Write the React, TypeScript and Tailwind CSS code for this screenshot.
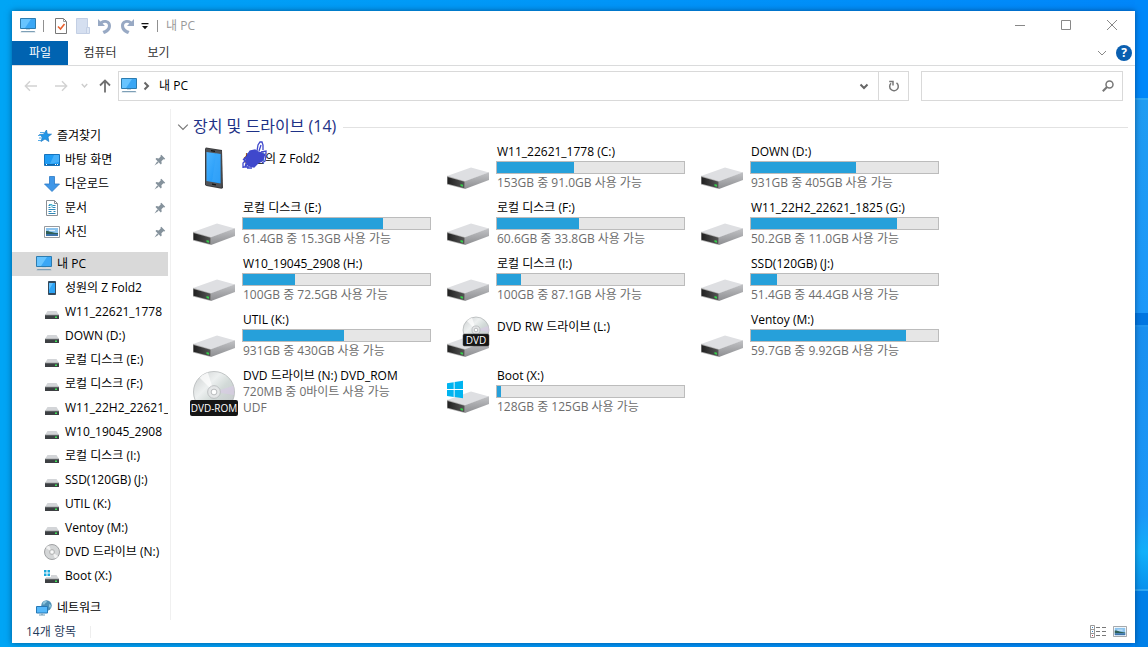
import type { ReactNode } from "react";

type DriveKind = "phone" | "drive" | "dvd-rw" | "dvd-rom" | "boot";

type Drive = {
  name: string;
  kind: DriveKind;
  used?: number;
  info?: string;
  format?: string;
};

const DRIVES: Drive[] = [
  { name: "성원의 Z Fold2", kind: "phone" },
  { name: "W11_22621_1778 (C:)", kind: "drive", used: 41, info: "153GB 중 91.0GB 사용 가능" },
  { name: "DOWN (D:)", kind: "drive", used: 56, info: "931GB 중 405GB 사용 가능" },
  { name: "로컬 디스크 (E:)", kind: "drive", used: 75, info: "61.4GB 중 15.3GB 사용 가능" },
  { name: "로컬 디스크 (F:)", kind: "drive", used: 44, info: "60.6GB 중 33.8GB 사용 가능" },
  { name: "W11_22H2_22621_1825 (G:)", kind: "drive", used: 78, info: "50.2GB 중 11.0GB 사용 가능" },
  { name: "W10_19045_2908 (H:)", kind: "drive", used: 28, info: "100GB 중 72.5GB 사용 가능" },
  { name: "로컬 디스크 (I:)", kind: "drive", used: 13, info: "100GB 중 87.1GB 사용 가능" },
  { name: "SSD(120GB) (J:)", kind: "drive", used: 14, info: "51.4GB 중 44.4GB 사용 가능" },
  { name: "UTIL (K:)", kind: "drive", used: 54, info: "931GB 중 430GB 사용 가능" },
  { name: "DVD RW 드라이브 (L:)", kind: "dvd-rw" },
  { name: "Ventoy (M:)", kind: "drive", used: 83, info: "59.7GB 중 9.92GB 사용 가능" },
  { name: "DVD 드라이브 (N:) DVD_ROM", kind: "dvd-rom", info: "720MB 중 0바이트 사용 가능", format: "UDF" },
  { name: "Boot (X:)", kind: "boot", used: 2, info: "128GB 중 125GB 사용 가능" },
];

const QUICK_ACCESS = [
  { name: "바탕 화면", icon: <DesktopIcon /> },
  { name: "다운로드", icon: <DownloadIcon /> },
  { name: "문서", icon: <DocumentIcon /> },
  { name: "사진", icon: <PictureIcon /> },
];

const TREE = [
  { name: "성원의 Z Fold2", icon: <SmallPhoneIcon /> },
  { name: "W11_22621_1778", icon: <SmallDriveIcon /> },
  { name: "DOWN (D:)", icon: <SmallDriveIcon /> },
  { name: "로컬 디스크 (E:)", icon: <SmallDriveIcon /> },
  { name: "로컬 디스크 (F:)", icon: <SmallDriveIcon /> },
  { name: "W11_22H2_22621_", icon: <SmallDriveIcon /> },
  { name: "W10_19045_2908", icon: <SmallDriveIcon /> },
  { name: "로컬 디스크 (I:)", icon: <SmallDriveIcon /> },
  { name: "SSD(120GB) (J:)", icon: <SmallDriveIcon /> },
  { name: "UTIL (K:)", icon: <SmallDriveIcon /> },
  { name: "Ventoy (M:)", icon: <SmallDriveIcon /> },
  { name: "DVD 드라이브 (N:)", icon: <SmallDiscIcon /> },
  { name: "Boot (X:)", icon: <SmallDriveIcon boot /> },
];

export default function App() {
  return (
    <div className="flex min-h-screen bg-linear-to-r from-[#00a5f5] to-[#0086fa] font-['Open_Sans','Noto_Sans_CJK_KR',sans-serif] text-xs text-black">
      <div className="relative z-10 mt-[11px] mb-1 ml-3 flex min-w-0 flex-1 flex-col bg-white shadow-[0_0_6px_rgba(0,40,80,0.6)]">
        <TitleBar />
        <Ribbon />
        <AddressBar />
        <div className="flex flex-1 pt-2">
          <Sidebar />
          <DriveList />
        </div>
        <StatusBar />
      </div>
      {/* Wallpaper strip on the right of the window */}
      <div className="flex w-[13px] shrink-0 flex-col">
        <div className="h-[98px] bg-[#0088fa]" />
        <div className="h-[215px] border-t-2 border-[#2fa9f5] bg-linear-to-b from-[#209cf2] to-[#1c98fa]" />
        <div className="h-3 bg-[#0076e2]" />
        <div className="h-[190px] border-t-2 border-[#2095f0] bg-linear-to-b from-[#1a90f0] to-[#1c98f8]" />
        <div className="h-[76px] border-b-2 border-[#2ea6f2] bg-linear-to-b from-[#1c98f8] via-[#12b0fa] to-[#0a92ee]" />
        <div className="flex-1 bg-[#0080e8]" />
      </div>
    </div>
  );
}

function TitleBar() {
  return (
    <header className="flex h-[30px] items-center pl-2">
      <PcIcon />
      <span className="ml-[7px] h-3 w-px bg-[#909090]" />
      <button aria-label="속성" className="ml-[10px]">
        <svg width="14" height="16" viewBox="0 0 14 16" fill="none">
          <path d="M1.5.5h8l3 3v12h-11z" fill="#fff" stroke="#777" />
          <path d="M9.5.5v3h3" stroke="#999" />
          <path d="m4 8.500 2.500 2.500L10.500 6" stroke="#e8602e" strokeWidth="1.600" />
        </svg>
      </button>
      <button aria-label="새 폴더" className="ml-2">
        <svg width="14" height="16" viewBox="0 0 14 16">
          <path d="M.5.5h11v15H.5z" fill="#d5dff0" stroke="#c3cfe4" />
          <path d="M10.500 9.500h3v6h-3z" fill="#dde6f4" stroke="#c3cfe4" />
        </svg>
      </button>
      <button aria-label="실행 취소" className="ml-[7px]">
        <UndoIcon />
      </button>
      <button aria-label="다시 실행" className="ml-2 -scale-x-100">
        <UndoIcon />
      </button>
      <button aria-label="빠른 실행 도구 모음 사용자 지정" className="ml-1.5">
        <svg width="8" height="8" viewBox="0 0 8 8">
          <path d="M.5 1h7v1.200h-7zM1 4h6L4 7.200z" fill="#111" />
        </svg>
      </button>
      <span className="ml-2 h-3 w-px bg-[#909090]" />
      <h1 className="ml-2 text-[#999]">내 PC</h1>
      <div className="ml-auto flex h-full pb-0.5">
        <button aria-label="최소화" className="grid w-[46px] place-items-center">
          <svg width="12" height="12" viewBox="0 0 12 12" stroke="#888">
            <path d="M1 6.500h10" />
          </svg>
        </button>
        <button aria-label="최대화" className="grid w-[46px] place-items-center">
          <svg width="12" height="12" viewBox="0 0 12 12" fill="none" stroke="#888">
            <path d="M1.500 1.500h9v9h-9z" />
          </svg>
        </button>
        <button aria-label="닫기" className="grid w-[46px] place-items-center">
          <svg width="12" height="12" viewBox="0 0 12 12" stroke="#888">
            <path d="m1 1 10 10M11 1 1 11" />
          </svg>
        </button>
      </div>
    </header>
  );
}

function Ribbon() {
  return (
    <nav className="flex h-[25px] items-center border-b border-[#dadbdc] pr-[3px]">
      <button className="h-6 w-14 bg-[#0063b1] text-white">파일</button>
      <button className="w-16 text-[#333]">컴퓨터</button>
      <button className="w-[53px] text-[#333]">보기</button>
      <button aria-label="리본 확장" className="mr-[9px] ml-auto">
        <Chevron className="text-[#888]" />
      </button>
      <button aria-label="도움말" className="grid size-4 place-items-center rounded-full bg-[#0a5fb0] text-xs leading-4 font-bold text-white">
        ?
      </button>
    </nav>
  );
}

function AddressBar() {
  return (
    <div className="flex items-center pt-[5px] pr-3 pl-3">
      <button aria-label="뒤로" className="w-[30px]">
        <ArrowIcon className="text-[#d2d2d2]" />
      </button>
      <button aria-label="앞으로" className="w-[26px]">
        <ArrowIcon className="rotate-180 text-[#d2d2d2]" />
      </button>
      <button aria-label="최근 위치" className="w-[17px] pl-px">
        <svg width="7" height="6" viewBox="0 0 7 6" fill="none" stroke="#ccc" strokeWidth="1.400">
          <path d="m.8 1 2.700 3L6.200 1" />
        </svg>
      </button>
      <button aria-label="위로" className="w-[21px] pl-px">
        <svg width="14" height="14" viewBox="0 0 14 14" fill="none" stroke="#707070" strokeWidth="1.800">
          <path d="M7 13.500V1.500M2 6.500l5-5 5 5" />
        </svg>
      </button>
      <div className="flex h-[30px] min-w-0 flex-1 items-center border border-[#d9d9d9] pl-0.5">
        <PcIcon />
        <Chevron className="ml-1 -rotate-90 text-[#666]" bold />
        <button className="ml-2">내 PC</button>
        <button aria-label="이전 위치" className="mr-[9px] ml-auto">
          <Chevron className="text-[#666]" bold />
        </button>
        <button aria-label="새로 고침" className="grid h-full w-[30px] place-items-center border-l border-[#d9d9d9]">
          <svg width="12" height="12" viewBox="0 0 12 12" fill="none" stroke="#777" strokeWidth="1.500">
            <path d="M3 3.300a4.300 4.300 0 1 0 5.500-.4M1.200 1.500H5v4" />
          </svg>
        </button>
      </div>
      <label className="ml-3 flex h-[30px] w-[202px] items-center border border-[#d9d9d9] pr-2">
        <input type="search" aria-label="내 PC 검색" className="min-w-0 flex-1 px-2 outline-none" />
        <svg width="12" height="12" viewBox="0 0 12 12" fill="none" stroke="#777">
          <circle cx="7.500" cy="4.500" r="3.500" strokeWidth="1.500" />
          <path d="M5 7 .8 11.200" strokeWidth="2" />
        </svg>
      </label>
    </div>
  );
}

function Sidebar() {
  return (
    <aside className="w-[159px] shrink-0 border-r border-[#f0f0f0] pt-[15px] pr-0.5">
      <TreeRow icon={<StarIcon />} name="즐겨찾기" top />
      {QUICK_ACCESS.map((item) => (
        <TreeRow key={item.name} icon={item.icon} name={item.name} pinned />
      ))}
      <div className="h-2" />
      <TreeRow icon={<PcIcon />} name="내 PC" top selected />
      {TREE.map((item) => (
        <TreeRow key={item.name} icon={item.icon} name={item.name} />
      ))}
      <div className="h-2" />
      <TreeRow icon={<NetworkIcon />} name="네트워크" top />
    </aside>
  );
}

type TreeRowProps = {
  icon: ReactNode;
  name: string;
  top?: boolean;
  pinned?: boolean;
  selected?: boolean;
};

function TreeRow({ icon, name, top, pinned, selected }: TreeRowProps) {
  return (
    <a
      href="#"
      className={`flex h-6 items-center gap-[5px] overflow-hidden whitespace-nowrap ${top ? "pl-6" : "pl-8"} ${selected ? "bg-[#d9d9d9]" : ""}`}
    >
      <span className="grid w-4 shrink-0 place-items-center">{icon}</span>
      <span>{name}</span>
      {pinned && <PinIcon />}
    </a>
  );
}

function DriveList() {
  return (
    <main className="min-w-0 flex-1 pr-[7px]">
      <button className="flex h-[35px] w-full items-center pt-px pl-1.5">
        <Chevron className="text-[#777]" wide />
        <h2 className="ml-1 pb-0.5 text-base text-[#1e3287]">장치 및 드라이브 (14)</h2>
        <span className="ml-[7px] h-px flex-1 bg-[#e2e2e2]" />
      </button>
      <div className="grid grid-cols-[repeat(auto-fill,254px)] gap-y-2 pl-[19px]">
        {DRIVES.map((drive) => (
          <DriveTile key={drive.name} drive={drive} />
        ))}
      </div>
    </main>
  );
}

function DriveTile({ drive }: { drive: Drive }) {
  return (
    <div className="flex h-12 gap-1 leading-4 whitespace-nowrap">
      <DriveIcon kind={drive.kind} />
      <div className={`relative w-[189px] ${drive.info ? "" : "pt-[7px]"}`}>
        <div className="pl-px">{drive.name}</div>
        {drive.used !== undefined && (
          <div
            role="progressbar"
            aria-label={drive.name}
            aria-valuenow={drive.used}
            className="mt-px mb-px h-[13px] border border-[#bcbcbc] bg-[#e6e6e6]"
          >
            <div className="h-full bg-[#26a0da]" style={{ width: `${drive.used}%` }} />
          </div>
        )}
        {drive.info && <div className="pl-px text-[#6d6d6d]">{drive.info}</div>}
        {drive.format && <div className="pl-px text-[#6d6d6d]">{drive.format}</div>}
        {drive.kind === "phone" && <Scribble />}
      </div>
    </div>
  );
}

function StatusBar() {
  return (
    <footer className="flex h-[23px] items-center pr-2 pl-[14px] text-[#1e395b]">
      <span className="border-r border-[#eee] pr-[14px] leading-3">14개 항목</span>
      <button aria-label="자세히" className="ml-auto">
        <svg width="17" height="13" viewBox="0 0 17 13" fill="none">
          <path d="M.5.500h4v12h-4zM.5 4.500h4M.5 8.500h4" stroke="#999" />
          <path d="M6 2.500h4M12 2.500h4M6 6.500h4M12 6.500h4M6 10.500h4M12 10.500h4" stroke="#777" />
          <path d="M2 2.500h1M2 6.500h1" stroke="#3b85c4" />
          <path d="M2 10.500h1" stroke="#c43b4a" />
        </svg>
      </button>
      <button aria-label="큰 아이콘" className="ml-1.5">
        <PictureIcon small />
      </button>
    </footer>
  );
}

/* Large icons */

function DriveIcon({ kind }: { kind: DriveKind }) {
  return (
    <svg width="48" height="48" viewBox="0 0 48 48" className="shrink-0">
      <defs>
        <linearGradient id="front" x1="0" y1="0" x2="1" y2="0">
          <stop offset="0" stopColor="#202020" />
          <stop offset="1" stopColor="#555" />
        </linearGradient>
        <linearGradient id="side" x1="0" y1="0" x2="0" y2="1">
          <stop offset="0" stopColor="#c2c3c6" />
          <stop offset="1" stopColor="#8d8e91" />
        </linearGradient>
        <linearGradient id="screen" x1="0" y1="0" x2="1" y2="1">
          <stop offset="0" stopColor="#4db4ff" />
          <stop offset="1" stopColor="#1492f5" />
        </linearGradient>
        <linearGradient id="disc" x1="0" y1="0" x2="1" y2="1">
          <stop offset="0" stopColor="#c9cccd" />
          <stop offset=".35" stopColor="#edf0f0" />
          <stop offset=".55" stopColor="#d2dad8" />
          <stop offset="1" stopColor="#c2c4c8" />
        </linearGradient>
      </defs>
      {kind === "phone" && (
        <>
          <path d="M16 3.500 32 6l1 38-1.500.8L16.500 42 15 41V4.500z" fill="#3d3d3f" />
          <path d="M16 4.500 31.500 7v36.500L16 41z" fill="#505256" />
          <path d="M16.500 8 30.500 10v29.500l-14-2.500z" fill="url(#screen)" />
          <path d="m26 9.500 4.500.500v29l-8.500-1.500z" fill="#3da8fa" opacity=".6" />
          <path d="M21 6.700 25 7.300M22 40.200l4 .6" stroke="#151515" strokeWidth="1.300" />
        </>
      )}
      {(kind === "drive" || kind === "boot" || kind === "dvd-rw") && (
        <>
          <path d="M3 32 27 23.500 45 28.500 21 37.500z" fill="#dedfe2" />
          <path d="M21 37.200 45 28.200V36L21 45z" fill="url(#side)" />
          <path d="M3 31.800 21 37.200V45L3 40.500z" fill="#aaa" />
          <path d="m3.500 33 17 4.700v6.500l-17-4.400z" fill="url(#front)" />
          <path d="m16.500 40 2.500.700v2l-2.500-.600z" fill="#35d04b" />
        </>
      )}
      {kind === "dvd-rw" && (
        <>
          <Disc cx={32} cy={18} r={13} />
          <rect x="19" y="22" width="26" height="12" rx="1.500" fill="#151515" stroke="#444" strokeWidth=".5" />
          <text x="32" y="32" textAnchor="middle" fontSize="10" fill="#fff">
            DVD
          </text>
        </>
      )}
      {kind === "dvd-rom" && (
        <>
          <Disc cx={24} cy={24} r={20.5} />
          <rect x="0" y="32" width="48" height="16" rx="2" fill="#151515" />
          <text x="24" y="44" textAnchor="middle" fontSize="10" fill="#fff">
            DVD-ROM
          </text>
        </>
      )}
      {kind === "boot" && (
        <path d="m3 15.200 6.700-1v6.900H3zM10.600 14l8.400-1.200v8.300h-8.400zM3 22h6.700v6.900l-6.700-1zM10.600 22H19v8.300L10.600 29z" fill="#00b4f0" />
      )}
    </svg>
  );
}

function Disc({ cx, cy, r }: { cx: number; cy: number; r: number }) {
  return (
    <>
      <circle cx={cx} cy={cy} r={r} fill="url(#disc)" stroke="#b4b7b9" strokeWidth=".8" />
      <path d={`M${cx} ${cy} L${cx - r * 0.7} ${cy - r * 0.7} A${r} ${r} 0 0 1 ${cx - r * 0.3} ${cy - r * 0.95}z`} fill="#fff" opacity=".7" />
      <path d={`M${cx} ${cy} L${cx + r * 0.95} ${cy - r * 0.3} A${r} ${r} 0 0 1 ${cx + r * 0.98} ${cy + r * 0.15}z`} fill="#d9c9e6" opacity=".6" />
      <circle cx={cx} cy={cy} r={r * 0.31} fill="#e4e6e7" stroke="#b5b8ba" strokeWidth=".8" />
      <circle cx={cx} cy={cy} r={r * 0.14} fill="#fff" stroke="#a9acae" strokeWidth=".8" />
    </>
  );
}

// Pen marks drawn over the phone owner's name
function Scribble() {
  return (
    <svg width="28" height="32" viewBox="0 0 28 32" className="absolute -top-1 left-0" fill="none" stroke="#3f48cc" strokeWidth="1.300">
      <path d="M6 14 8 11l5-1 3 2 4 1 2 4-2 4-4 2-4 4-5-1-2-4-1-4z" fill="#3f48cc" />
      <path d="M1 28v-5l4-3-2 7 4-5-1 5H1M1 20l3-3-2 5M5 28h5" />
      <path d="m15 11 1-6 2-3h2l1 3v5M17 11l2-6" />
      <path d="m19 12 5-1v3l-4 1 4 1-1 5-3 2" />
    </svg>
  );
}

/* Small icons */

function PcIcon() {
  return (
    <svg width="16" height="16" viewBox="0 0 16 16">
      <path d="M.5.500h15v10H.5z" fill="#3ba7f5" stroke="#2c7cb0" />
      <path d="M1 1h10L5 10H1z" fill="#67c4ff" />
      <path d="M6 11h4v1H6z" fill="#c4d6e2" />
      <path d="M1.500 13h13l1 1.200H.5z" fill="#7d9fb6" />
    </svg>
  );
}

function StarIcon() {
  return (
    <svg width="16" height="16" viewBox="0 0 16 16">
      <path d="m10.500 2 .8 4 4.200.2-3.500 2.600.8 4.700-3.800-2.500-4 2.500 1.400-4.300L3.500 6.500l4-.3z" fill="#2196e8" stroke="#1878c4" strokeWidth=".7" />
      <path d="M4 4.500h4M2 7.500h3M3 10h3M2 12.500h3" stroke="#55aae6" />
    </svg>
  );
}

function DesktopIcon() {
  return (
    <svg width="16" height="12" viewBox="0 0 16 12">
      <path d="M.5.500h15v11H.5z" fill="#1e9cf5" stroke="#1673bd" />
      <path d="M10 1h5v7L6 10z" fill="#45b0fa" />
      <path d="M1 10.500h14" stroke="#1167a8" />
      <path d="M2 10.500h1M11 10.500h1M13 10.500h1" stroke="#fff" />
    </svg>
  );
}

function DownloadIcon() {
  return (
    <svg width="16" height="16" viewBox="0 0 16 16">
      <path d="M5.500.500h5v7.500h5L8 15.500.5 8h5z" fill="#3f97e8" stroke="#2b78c5" strokeWidth=".8" />
    </svg>
  );
}

function DocumentIcon() {
  return (
    <svg width="12" height="16" viewBox="0 0 12 16" fill="none">
      <path d="M.5.500h8l3 3v12H.5z" fill="#fff" stroke="#8a8f94" />
      <path d="M8.500.500v3h3" stroke="#8a8f94" />
      <path d="M2.500 5.500h2M6.500 5.500h3M2.500 7.500h2M6.500 7.500h3M2.500 9.500h7M2.500 11.500h3M7.500 11.500h2M2.500 13.500h7" stroke="#3188b8" />
      <path d="M3 4.500h3v3" stroke="#45b4cf" />
    </svg>
  );
}

function PictureIcon({ small }: { small?: boolean }) {
  return (
    <svg width={small ? 14 : 16} height={small ? 11 : 12} viewBox="0 0 16 12" preserveAspectRatio="none">
      <path d="M.5.500h15v11H.5z" fill="#fff" stroke="#969a9f" />
      <path d="M2 2h12v8H2z" fill="#8dc4ee" />
      <path d="M2 5c4 0 6 2 12 2v1H2z" fill="#2f5f56" />
      <path d="M2 8h12v2H2z" fill="#3c72aa" />
      <path d="M5 4h6v1H5z" fill="#dceefa" />
    </svg>
  );
}

function SmallPhoneIcon() {
  return (
    <svg width="8" height="14" viewBox="0 0 8 14">
      <rect width="8" height="14" rx=".8" fill="#34495c" />
      <path d="M1 2h6v10H1z" fill="#2fa4f5" />
      <path d="M1 2h4L1 9z" fill="#62c1ff" />
    </svg>
  );
}

function SmallDriveIcon({ boot }: { boot?: boolean }) {
  return (
    <svg width="16" height="16" viewBox="0 0 16 16">
      <path d="M3.500 7h9L15 11H1z" fill="#d3d5d8" />
      <path d="M1 11h14v4H1z" fill="#3d4043" />
      <path d="M1 10.500h14v.800H1z" fill="#a6a8aa" />
      <path d="M11 12.500h2v1.500h-2z" fill="#3fe05a" />
      {boot && (
        <>
          <path d="M0 2h7v7H0z" fill="#fff" />
          <path d="M0 2h2.500v2.500H0zM3.500 2H6v2.500H3.500zM0 5.500h2.500V8H0zM3.500 5.500H6V8H3.500z" fill="#18a8dc" />
        </>
      )}
    </svg>
  );
}

function SmallDiscIcon() {
  return (
    <svg width="16" height="16" viewBox="0 0 16 16">
      <circle cx="8" cy="8" r="7.500" fill="#d4d6d7" stroke="#9fa1a3" />
      <path d="M8 8 2 4a7 7 0 0 1 3-2.600zM8 8l6 4a7 7 0 0 1-3 2.600z" fill="#f2f2f2" />
      <circle cx="8" cy="8" r="2.500" fill="#e6e8e8" stroke="#aaa" strokeWidth=".8" />
      <circle cx="8" cy="8" r="1" fill="#fff" />
    </svg>
  );
}

function NetworkIcon() {
  return (
    <svg width="16" height="16" viewBox="0 0 16 16">
      <circle cx="10.500" cy="5.500" r="5.200" fill="#4d8fb5" />
      <path d="M7 2.500C8 1 10 .8 11 1.500c0 1-2 1.500-2.500 3H6.500zM13 4l2 1-.5 3-1.500-1z" fill="#8cc4dc" />
      <path d="M.5 6.500h11v6.500H.5z" fill="#55b8fa" stroke="#2778b5" />
      <path d="M3 15h6" stroke="#6f9db8" />
      <path d="M5 13.500h2V15H5z" fill="#89adc2" />
    </svg>
  );
}

function PinIcon() {
  return (
    <svg width="12" height="12" viewBox="0 0 12 12" className="mr-[2px] ml-auto" fill="#85929c">
      <path d="M7.300.8 11.200 4.700l-.8.700-1-.200-2 2 .3 2.300-.900.900L1.500 5l.900-.900 2.300.300 2-2-.200-1z" />
      <path d="m3.300 7.300 1.400 1.400L.5 11.500z" />
    </svg>
  );
}

function UndoIcon() {
  return (
    <svg width="15" height="16" viewBox="0 0 15 16">
      <path d="M1 1v7h7L5.600 5.600C8 4 11 5 11 7.800c0 2.600-2.500 4.400-5.500 5.200L7 16c4-1 7-4 7-8.200C14 2.500 8 .5 3.400 3.400z" fill="#98a9c4" />
    </svg>
  );
}

function ArrowIcon({ className }: { className: string }) {
  return (
    <svg width="14" height="12" viewBox="0 0 14 12" fill="none" stroke="currentColor" strokeWidth="1.400" className={className}>
      <path d="M13 6H1.500M6 1.200 1.300 6 6 10.800" />
    </svg>
  );
}

type ChevronProps = {
  className: string;
  bold?: boolean;
  wide?: boolean;
};

function Chevron({ className, bold, wide }: ChevronProps) {
  return (
    <svg
      width={wide ? 12 : 10}
      height={wide ? 12 : 10}
      viewBox="0 0 10 10"
      fill="none"
      stroke="currentColor"
      strokeWidth={bold ? 2 : 1}
      className={className}
    >
      <path d={bold ? "m1.500 3.500 3.500 3.500 3.500-3.500" : "m1 3 4 4 4-4"} />
    </svg>
  );
}
